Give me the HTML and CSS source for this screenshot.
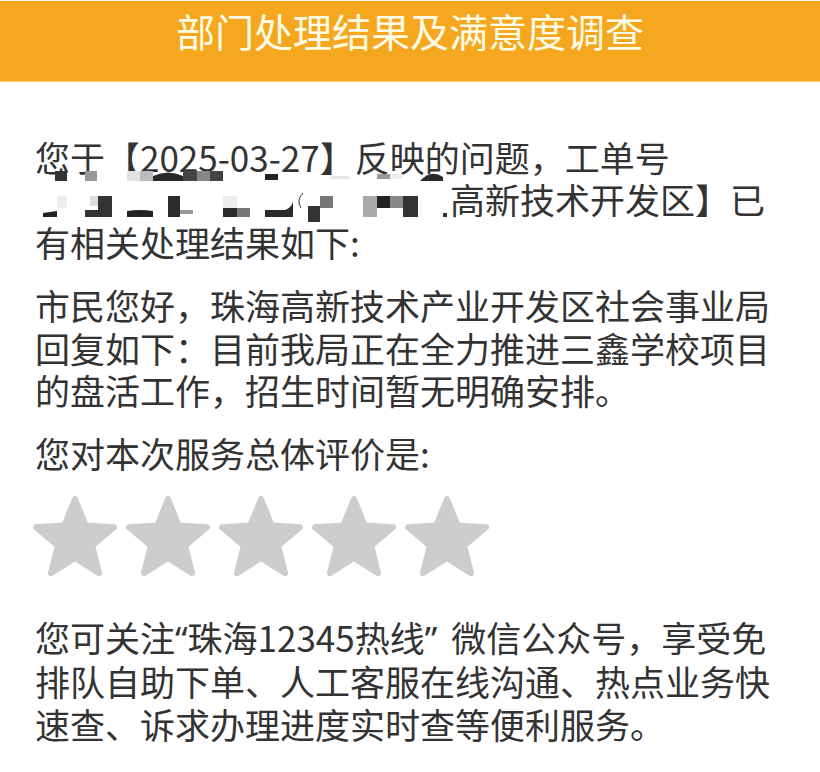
FILE: index.html
```html
<!DOCTYPE html>
<html lang="zh-CN">
<head>
<meta charset="utf-8">
<title>部门处理结果及满意度调查</title>
<link rel="stylesheet" href="styles.css">
</head>
<body>
<header class="topbar"><h1 class="title">部门处理结果及满意度调查</h1></header>
<main class="content">
  <p class="para">您于【2025-03-27】反映的问题，工单号<svg class="mosaic" width="415" height="42" viewBox="0 0 415 42" aria-hidden="true">
    <rect x="20" y="-7" width="12" height="10" fill="#333"/>
    <rect x="50" y="-7" width="12" height="10" fill="#999"/>
    <rect x="92" y="-7" width="13" height="10" fill="#e2e2e2"/>
    <rect x="105" y="-7" width="13" height="10" fill="#bbb"/>
    <path d="M118 3 L118 -2 Q133 -9 148 -2 L148 3 Z" fill="#2a2a2a"/>
    <rect x="148" y="-7" width="14" height="10" fill="#444"/>
    <rect x="162" y="-7" width="13" height="10" fill="#888"/>
    <rect x="175" y="-7" width="13" height="10" fill="#444"/>
    <rect x="230" y="-4" width="13" height="6" fill="#222"/>
    <rect x="295" y="-2" width="20" height="3" fill="#e6e6e6"/>
    <rect x="342" y="-4" width="13" height="5" fill="#999"/>
    <rect x="355" y="-4" width="13" height="5" fill="#eee"/>
    <path d="M385 3 Q396 -9 408 -1 L408 3 Z" fill="#2a2a2a"/>
    <rect x="22" y="18" width="10" height="12" fill="#eee"/>
    <path d="M8 39 L8 35 L22 33 L22 39 Z" fill="#222"/>
    <rect x="55" y="18" width="8" height="10" fill="#ddd"/>
    <rect x="63" y="18" width="14" height="21" fill="#333"/>
    <rect x="50" y="32" width="27" height="7" fill="#333"/>
    <path d="M92 33 Q105 31 118 33 L118 39 L92 39 Z" fill="#222"/>
    <rect x="133" y="18" width="12" height="21" fill="#2a2a2a"/>
    <rect x="145" y="32" width="13" height="4" fill="#999"/>
    <rect x="188" y="18" width="14" height="12" fill="#eee"/>
    <rect x="188" y="30" width="27" height="9" fill="#2a2a2a"/>
    <rect x="202" y="30" width="13" height="9" fill="#777"/>
    <path d="M230 39 L230 32 L250 32 Q256 30 258 24 L258 39 Z" fill="#2a2a2a"/>
    <path d="M266 30 Q261 22 268 15" stroke="#333" stroke-width="1" fill="none"/>
    <rect x="273" y="28" width="12" height="16" fill="#333"/>
    <rect x="285" y="18" width="13" height="12" fill="#777"/>
    <rect x="328" y="18" width="14" height="21" fill="#aaa"/>
    <rect x="342" y="18" width="13" height="12" fill="#222"/>
    <rect x="355" y="18" width="13" height="12" fill="#888"/>
    <rect x="368" y="18" width="15" height="21" fill="#333"/>
    <rect x="408" y="35" width="4" height="4" fill="#333"/>
  </svg>高新技术开发区】已有相关处理结果如下:</p>
  <p class="para">市民您好，珠海高新技术产业开发区社会事业局回复如下：目前我局正在全力推进三鑫学校项目的盘活工作，招生时间暂无明确安排。</p>
  <p class="para">您对本次服务总体评价是:</p>
  <div class="stars">
    <svg class="star" viewBox="-42 -44 84 80" width="84" height="80"><polygon points="0,-41 10.6,-14.6 39,-12.7 17.1,5.6 24.1,33.2 0,18 -24.1,33.2 -17.1,5.6 -39,-12.7 -10.6,-14.6"/></svg>
    <svg class="star" viewBox="-42 -44 84 80" width="84" height="80"><polygon points="0,-41 10.6,-14.6 39,-12.7 17.1,5.6 24.1,33.2 0,18 -24.1,33.2 -17.1,5.6 -39,-12.7 -10.6,-14.6"/></svg>
    <svg class="star" viewBox="-42 -44 84 80" width="84" height="80"><polygon points="0,-41 10.6,-14.6 39,-12.7 17.1,5.6 24.1,33.2 0,18 -24.1,33.2 -17.1,5.6 -39,-12.7 -10.6,-14.6"/></svg>
    <svg class="star" viewBox="-42 -44 84 80" width="84" height="80"><polygon points="0,-41 10.6,-14.6 39,-12.7 17.1,5.6 24.1,33.2 0,18 -24.1,33.2 -17.1,5.6 -39,-12.7 -10.6,-14.6"/></svg>
    <svg class="star" viewBox="-42 -44 84 80" width="84" height="80"><polygon points="0,-41 10.6,-14.6 39,-12.7 17.1,5.6 24.1,33.2 0,18 -24.1,33.2 -17.1,5.6 -39,-12.7 -10.6,-14.6"/></svg>
  </div>
  <p class="para">您可关注<span class="q">“</span>珠海12345热线<span class="q q-close">”</span>微信公众号，享受免排队自助下单、人工客服在线沟通、热点业务快速查、诉求办理进度实时查等便利服务。</p>
</main>
</body>
</html>
```
FILE: styles.css
```css
html, body {
  margin: 0;
  padding: 0;
  background: #fff;
}
body {
  font-family: "Noto Sans CJK SC", "Noto Sans", sans-serif;
  color: #333;
}
.topbar {
  margin-top: 1px;
  height: 81px;
  background: #f5a81f;
  border-bottom: 1px solid #f3c978;
  box-sizing: border-box;
  display: flex;
  justify-content: center;
}
.title {
  margin: 0;
  padding-top: 5px;
  font-size: 39px;
  line-height: 48px;
  font-weight: 400;
  color: #fffbe6;
}
.content {
  padding: 54px 35px 0 35px;
  width: 750px;
}
.para {
  margin: 0 0 21px 0;
  font-size: 35px;
  line-height: 42.4px;
}
.q {
  font-family: "Noto Sans", sans-serif;
}
.q-close {
  margin-right: 14px;
}
.mosaic {
  overflow: visible;
  vertical-align: top;
}
.stars {
  display: flex;
  gap: 9px;
  margin: 20px 0 40px -2px;
}
.star {
  display: block;
  overflow: visible;
}
.star polygon {
  fill: #cdcdcd;
  stroke: #cdcdcd;
  stroke-width: 6;
  stroke-linejoin: round;
}
```
